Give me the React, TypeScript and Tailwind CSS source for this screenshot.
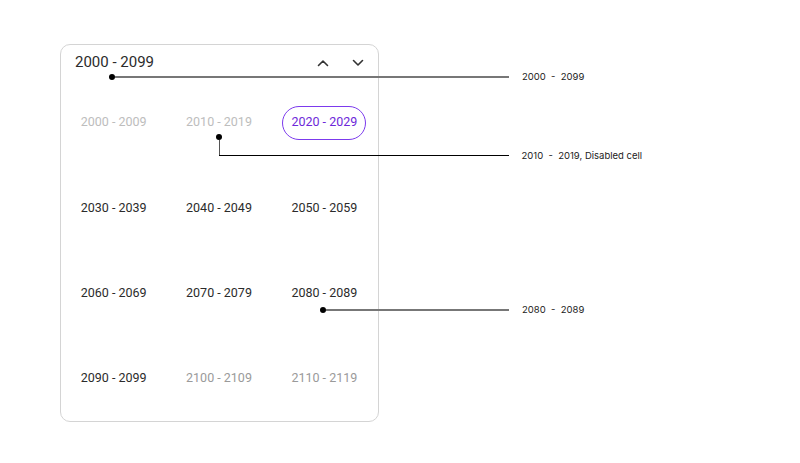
import React from "react";

type Cell = { label: string; state: "disabled" | "outside" | "selected" | "normal" };

const cells: Cell[] = [
  { label: "2000 - 2009", state: "disabled" },
  { label: "2010 - 2019", state: "disabled" },
  { label: "2020 - 2029", state: "selected" },
  { label: "2030 - 2039", state: "normal" },
  { label: "2040 - 2049", state: "normal" },
  { label: "2050 - 2059", state: "normal" },
  { label: "2060 - 2069", state: "normal" },
  { label: "2070 - 2079", state: "normal" },
  { label: "2080 - 2089", state: "normal" },
  { label: "2090 - 2099", state: "normal" },
  { label: "2100 - 2109", state: "outside" },
  { label: "2110 - 2119", state: "outside" },
];

function Chevron({ up }: { up?: boolean }) {
  return (
    <svg width="12" height="8" viewBox="0 0 12 8" fill="none">
      <path
        d={up ? "M1.5 6.5 L6 2 L10.5 6.5" : "M1.5 1.5 L6 6 L10.5 1.5"}
        stroke="#333"
        strokeWidth="1.6"
        strokeLinecap="round"
        strokeLinejoin="round"
      />
    </svg>
  );
}

function Label({ text }: { text: string }) {
  return (
    <span className="ml-[13px] text-[9.5px] text-[#222] font-['Inter',sans-serif] whitespace-pre leading-none">
      {text}
    </span>
  );
}

export default function App() {
  return (
    <main className="relative w-[800px] h-[463px] bg-white pt-[44px] pl-[60px] font-['Roboto',sans-serif]">
      {/* decade picker card */}
      <div className="w-[319px] h-[378px] border border-[#d4d4d4] rounded-[10px] flex flex-col">
        <div className="h-[35px] flex items-center justify-between pl-[14px] pr-[14px]">
          <span className="text-[15px] text-[#2b2b2b]">2000 - 2099</span>
          <div className="flex items-center gap-[23px] mt-[1px]">
            <Chevron up />
            <Chevron />
          </div>
        </div>
        <div className="flex-1 grid grid-cols-3 grid-rows-4 pr-[1px]">
          {cells.map((c) => (
            <div key={c.label} className="flex items-center justify-center">
              {c.state === "selected" ? (
                <span className="h-[34px] px-[8px] whitespace-nowrap flex items-center justify-center rounded-full border border-[#7c3aed] text-[#6d28d9] text-[12.5px]">
                  {c.label}
                </span>
              ) : (
                <span
                  className={
                    c.state === "disabled"
                      ? "text-[12.5px] text-[#bdbdbd] whitespace-nowrap"
                      : c.state === "outside"
                      ? "text-[12.5px] text-[#9a9a9a] whitespace-nowrap"
                      : "text-[12.5px] text-[#2b2b2b] whitespace-nowrap"
                  }
                >
                  {c.label}
                </span>
              )}
            </div>
          ))}
        </div>
      </div>

      {/* callout: header range */}
      <div className="absolute left-[109px] top-[72px] h-[10px] flex items-center">
        <div className="w-[6px] h-[6px] rounded-full bg-black" />
        <div className="w-[394px] h-[2px] bg-[#777]" />
        <Label text="2000  -  2099" />
      </div>

      {/* callout: disabled cell */}
      <div className="absolute left-[216px] top-[134px] flex flex-col items-start">
        <div className="w-[6px] h-[6px] rounded-full bg-black" />
        <div className="ml-[2.5px] w-[1.5px] h-[15px] bg-[#555]" />
        <div className="ml-[2.5px] h-[1px] flex items-center">
          <div className="w-[290px] h-[1px] bg-black" />
          <Label text="2010  -  2019, Disabled cell" />
        </div>
      </div>

      {/* callout: 2080 cell */}
      <div className="absolute left-[320px] top-[305px] h-[10px] flex items-center">
        <div className="w-[6px] h-[6px] rounded-full bg-black" />
        <div className="w-[183px] h-[2px] bg-[#777]" />
        <Label text="2080  -  2089" />
      </div>
    </main>
  );
}
